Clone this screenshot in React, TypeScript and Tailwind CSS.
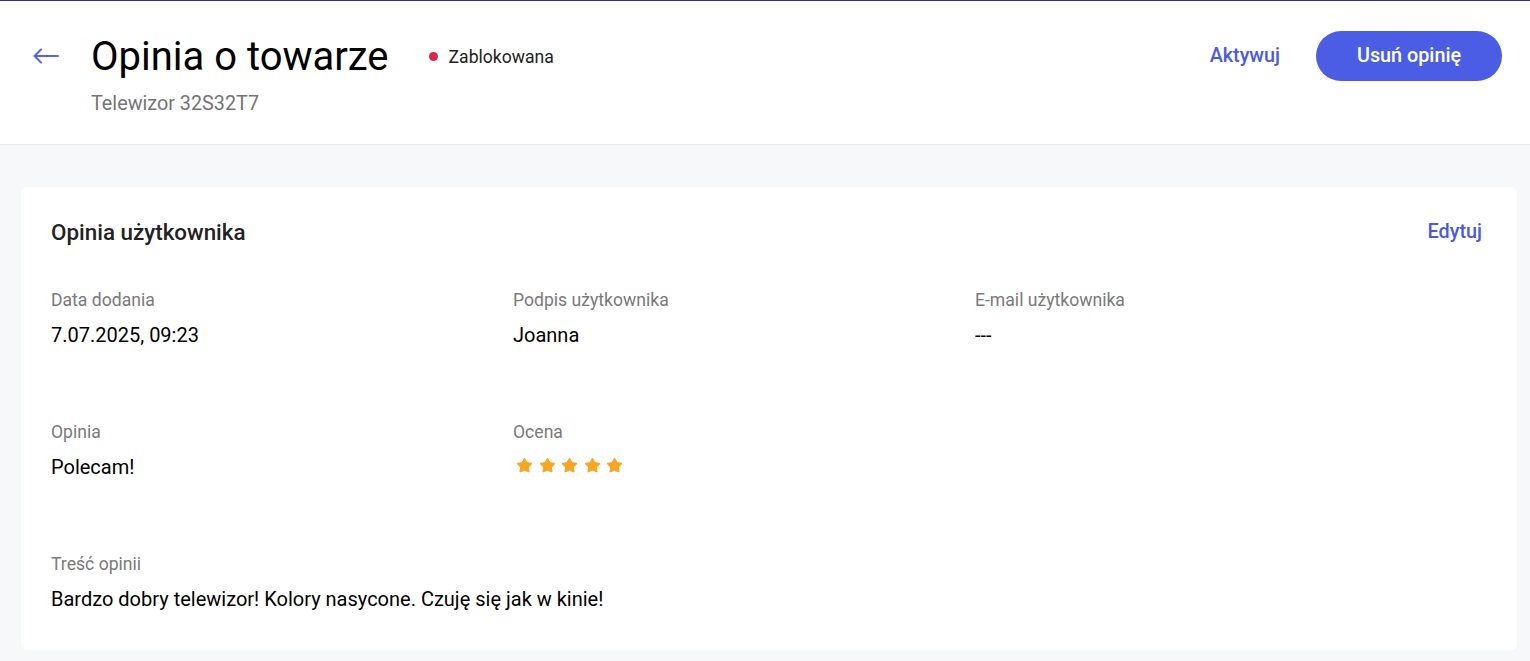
import { Star } from 'lucide-react'

function Field({ label, children }: { label: string; children: React.ReactNode }) {
  return (
    <div className="h-[132px]">
      <p className="text-[17.6px] leading-[20px] text-[#7a7a7a]">{label}</p>
      <div className="mt-[15px] text-[20px] leading-[20px] text-black">{children}</div>
    </div>
  )
}

export default function App() {
  return (
    <div className="min-h-[661px] bg-[#f7f8fa] font-['Roboto',sans-serif] border-t border-[#283593]">
      <header className="h-[144px] bg-white border-b border-[#eceef1] flex items-start justify-between pl-[33px] pr-[28px]">
        <div className="flex items-start">
          <button className="mt-[39px] w-[26px] h-[32px] flex items-center text-[#5563e8]">
            <svg width="26" height="16" viewBox="0 0 26 16" fill="none" stroke="currentColor" strokeWidth="2" strokeLinecap="round" strokeLinejoin="round">
              <path d="M25 8H2" />
              <path d="M8 1.5L1.5 8 8 14.5" />
            </svg>
          </button>
          <div className="ml-[32px] mt-[33px]">
            <div className="flex items-center">
              <h1 className="text-[40px] leading-[46px] text-black">Opinia o towarze</h1>
              <div className="ml-[40px] flex items-center gap-[11px]">
                <span className="w-[9px] h-[9px] rounded-full bg-[#dc2645]" />
                <span className="text-[17.6px] text-[#222]">Zablokowana</span>
              </div>
            </div>
            <p className="mt-[12px] text-[19.8px] leading-[24px] text-[#757575]">Telewizor 32S32T7</p>
          </div>
        </div>
        <div className="flex items-center gap-[36px] mt-[30px]">
          <button className="text-[19.8px] font-medium text-[#4a5be0]">Aktywuj</button>
          <button className="h-[50px] w-[186px] rounded-full bg-[#4b5de4] text-white text-[19.8px] font-medium">
            Usuń opinię
          </button>
        </div>
      </header>

      <main className="px-[21px] pt-[42px]">
        <section className="bg-white rounded-[6px] pl-[30px] pr-[35px] pt-[30px] pb-[41px] w-[1496px]">
          <div className="flex items-center justify-between">
            <h2 className="text-[22.4px] leading-[24px] font-medium text-[#222]">Opinia użytkownika</h2>
            <button className="text-[19.8px] font-medium text-[#4a5be0]">Edytuj</button>
          </div>
          <div className="mt-[43px] grid grid-cols-[462px_462px_1fr]">
            <Field label="Data dodania">7.07.2025, 09:23</Field>
            <Field label="Podpis użytkownika">Joanna</Field>
            <Field label="E-mail użytkownika">---</Field>
            <Field label="Opinia">Polecam!</Field>
            <Field label="Ocena">
              <div className="flex gap-[5.5px] pl-[3px]">
                {[0, 1, 2, 3, 4].map(i => (
                  <Star key={i} size={17} fill="#f5a623" stroke="#f5a623" strokeWidth={1.5} />
                ))}
              </div>
            </Field>
            <div />
          </div>
          <div>
            <p className="text-[17.6px] leading-[20px] text-[#7a7a7a]">Treść opinii</p>
            <p className="mt-[15px] text-[20px] leading-[20px] text-black">
              Bardzo dobry telewizor! Kolory nasycone. Czuję się jak w kinie!
            </p>
          </div>
        </section>
      </main>
    </div>
  )
}
